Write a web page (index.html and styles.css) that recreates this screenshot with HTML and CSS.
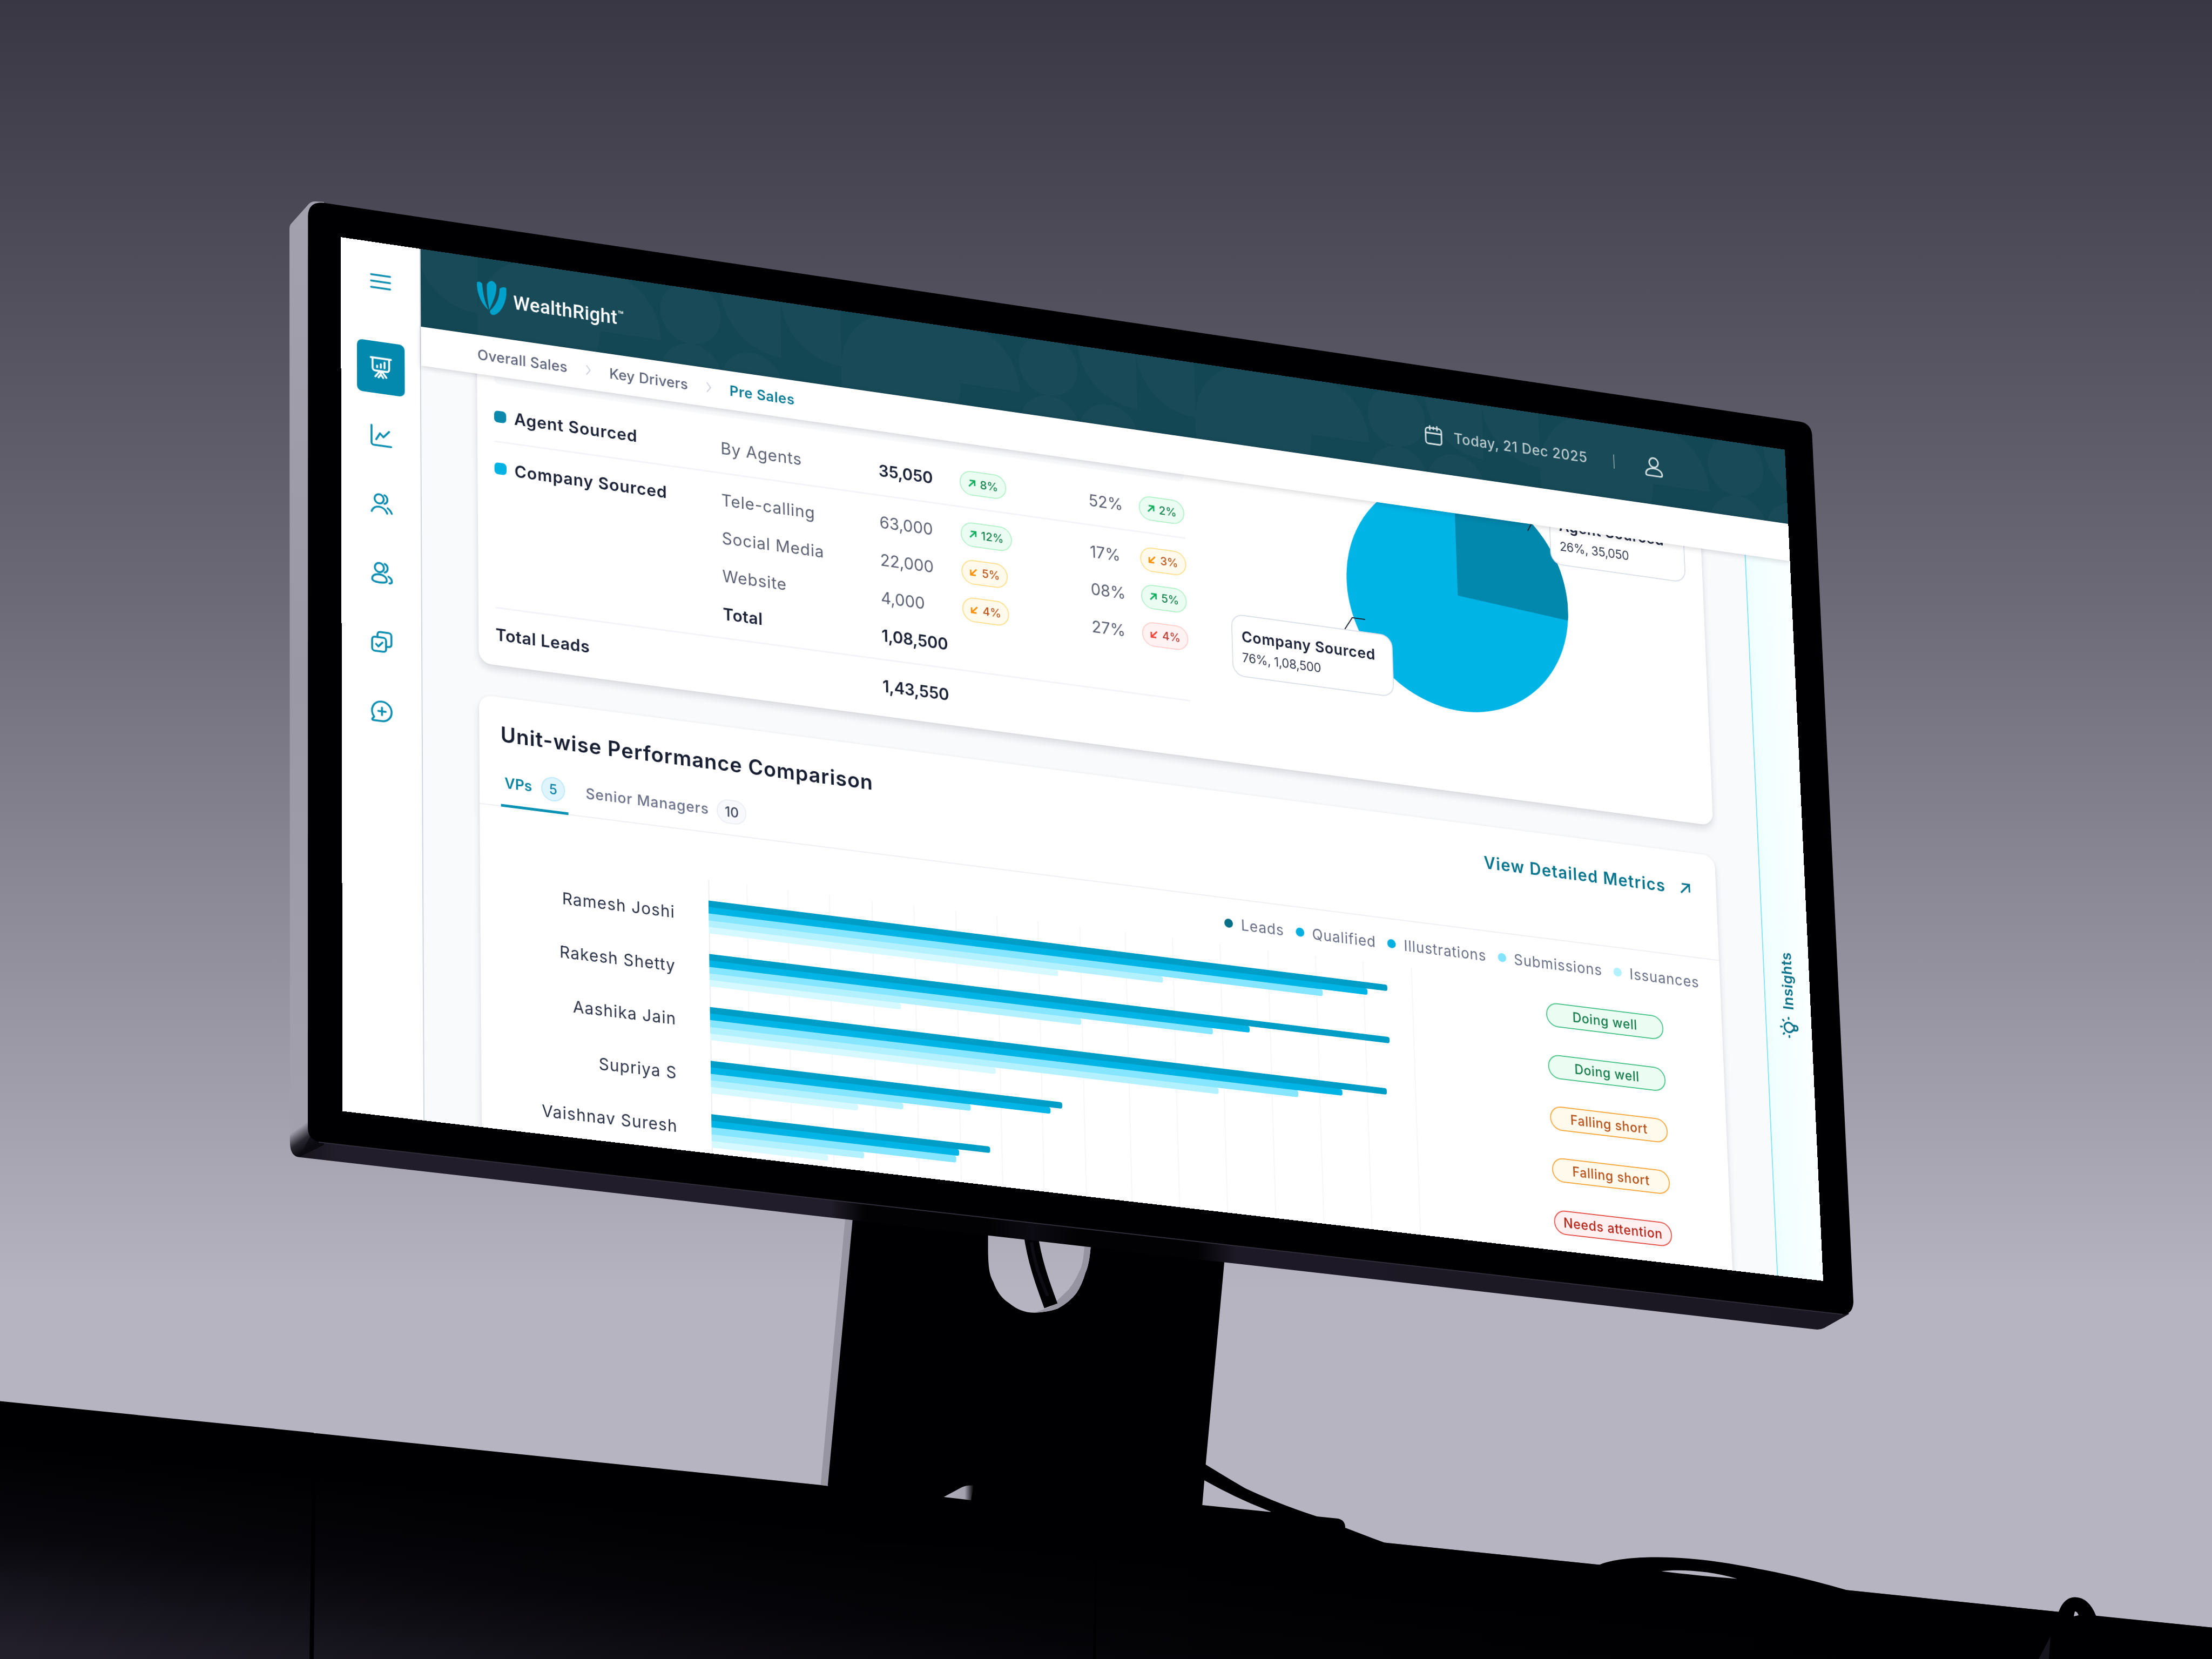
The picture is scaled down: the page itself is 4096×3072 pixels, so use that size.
FILE: index.html
```html
<!DOCTYPE html>
<html lang="en">
<head>
    <meta charset="UTF-8">
    <meta name="viewport" content="width=device-width, initial-scale=1.0">
    <title>WealthRight - Pre Sales</title>
    <link rel="stylesheet" href="styles.css">
</head>
<body>
    <div class="scene">
        <!-- desk, stand and monitor body -->
        <svg class="backdrop" viewBox="0 0 4096 3072" width="4096" height="3072">
            <defs>
                <linearGradient id="deskFade" gradientUnits="userSpaceOnUse" x1="300" y1="2700" x2="262" y2="3072">
                    <stop offset="0" stop-color="#000002"/>
                    <stop offset="0.45" stop-color="#08070c"/>
                    <stop offset="1" stop-color="#221f2b"/>
                </linearGradient>
                <linearGradient id="deskShade" x1="0" y1="0" x2="1" y2="0">
                    <stop offset="0" stop-color="#000002" stop-opacity="0"/>
                    <stop offset="0.75" stop-color="#000002" stop-opacity="0.7"/>
                    <stop offset="1" stop-color="#000002" stop-opacity="1"/>
                </linearGradient>
                <linearGradient id="sideFace" gradientUnits="userSpaceOnUse" x1="536" y1="380" x2="536" y2="2140">
                    <stop offset="0" stop-color="#a3a1ae"/>
                    <stop offset="0.5" stop-color="#9a98a5"/>
                    <stop offset="1" stop-color="#a3a1ae"/>
                </linearGradient>
                <linearGradient id="cornerFade" gradientUnits="userSpaceOnUse" x1="548" y1="2092" x2="572" y2="2126">
                    <stop offset="0" stop-color="#14121a" stop-opacity="0"/>
                    <stop offset="0.55" stop-color="#14121a" stop-opacity="0.85"/>
                    <stop offset="1" stop-color="#0b0a10"/>
                </linearGradient>
                <linearGradient id="bottomFace" gradientUnits="userSpaceOnUse" x1="540" y1="0" x2="3430" y2="0">
                    <stop offset="0" stop-color="#14121a"/>
                    <stop offset="0.03" stop-color="#211d2a"/>
                    <stop offset="0.345" stop-color="#211d2a"/>
                    <stop offset="0.368" stop-color="#020204"/>
                    <stop offset="0.445" stop-color="#020204"/>
                    <stop offset="0.475" stop-color="#0d0b13"/>
                    <stop offset="0.505" stop-color="#020204"/>
                    <stop offset="0.58" stop-color="#020204"/>
                    <stop offset="0.605" stop-color="#1d1926"/>
                    <stop offset="1" stop-color="#1b1722"/>
                </linearGradient>
                <linearGradient id="gapFade" x1="0" y1="0" x2="1" y2="0">
                    <stop offset="0" stop-color="#b0aebb"/>
                    <stop offset="0.7" stop-color="#a3a1ae"/>
                    <stop offset="1" stop-color="#000002"/>
                </linearGradient>
            </defs>

            <!-- desk -->
            <path fill="url(#deskFade)" d="M0 2594.6 L581 2653 L583 2657 L586 2654 L1520 2750 L2563.6 2856.6 L2961.6 2897.4 C2985 2888 3020 2883.4 3069.4 2883.4 C3150 2884 3215 2897 3265.3 2906.7 Q3340 2921 3420 2944.5 L3812 2984.7 Q3822 2957.6 3842.3 2957.6 Q3868 2958 3881.5 2992.5 L4096 3013.8 V3072 H0 Z"/>
            <path fill="url(#deskShade)" d="M0 2594.6 L2563.6 2856.6 L2961.6 2897.4 L4096 3013.8 V3072 H0 Z"/>
            <path fill="#000002" d="M579 2654 L586 2654 L581 3072 H573 Z M2029 2820 H2033 L2029 3072 H2024 Z M3388 2944 H3391 L3390 3072 H3387 Z"/>
            <path fill="#b5b3c0" d="M3076 2909.6 C3110 2905 3170 2909 3217 2923.5 C3170 2920 3120 2915 3076 2909.6 Z M3840 2993 L3842 2984 Q3846 2983 3849 2991 Z"/>
            <path fill="#16141d" d="M3797 3030 L3794 3072 H3775 Z"/>

            <!-- stand -->
            <path fill="#9795a2" d="M1565.6 2250 L1519.6 2750 L1536 2752 L1583 2250 Z"/>
            <path fill="#000002" fill-rule="evenodd" d="M1580.5 2240 L1532.8 2750.7 L1600 2860 H2340 L2352.8 2799.7 L2226.3 2787 L2232.5 2713 L2267 2338 L2275 2240 Z
                M1829.6 2280 V2315 C1830 2350 1833 2362 1839 2373 C1846 2393 1856 2405 1868.6 2413 Q1890 2431 1915.5 2430.8 Q1940 2430 1958.4 2423.3 Q1981 2411 1993.6 2394 Q2004 2378 2010 2356.8 Q2020 2335 2021 2280 Z"/>
            <path fill="#9694a1" d="M2009 2280 C2008 2330 2004 2345 1997.3 2357 Q1990 2374 1978 2388.7 L1945 2420 L1915 2430.8 Q1940 2430 1958.4 2423.3 Q1981 2411 1993.6 2394 Q2004 2378 2010 2356.8 Q2020 2335 2021 2280 Z"/>
            <path fill="none" stroke="#020204" stroke-width="26" d="M1908 2280 C1914 2330 1930 2375 1946 2418"/>
            <path fill="none" stroke="#0e0d14" stroke-width="6" d="M1910 2300 C1916 2345 1930 2375 1940 2400"/>
            <path fill="url(#gapFade)" d="M1747.6 2772 L1781 2754 Q1790 2750 1803 2750.7 L1798 2778 Z"/>
            <path fill="#000002" d="M2231 2711 Q2270 2735 2306 2756 Q2370 2786 2438.6 2808 L2478 2812 Q2491 2815 2491 2829 L2563.6 2856.6 L2491 2900 H2280 L2353 2799 Q2290 2775 2228 2740 Z"/>

            <!-- monitor -->
            <path fill="url(#sideFace)" d="M584 373 Q576 373 571.700 377.800 L541 412 Q536 416 536 424 L537 2118 Q538 2141 554 2142.8 L600 2120 V374 Z"/>
            <path fill="url(#bottomFace)" d="M574 2105 L554 2142.8 L3360 2461.5 Q3370 2463 3378 2459 L3424 2433 L3400 2400 Z"/>
            <path fill="url(#cornerFade)" d="M536 2085 L537 2118 Q538 2141 554 2142.8 L600 2120 V2070 Z"/>
            <path fill="#000002" d="M570.3 400 Q571 373 598.6 375.4 L3334 781 Q3354 785 3355.5 806 L3432 2411 Q3431 2431 3416 2434.2 L596 2115.5 Q570 2112 570 2088 Z"/>
            <path fill="none" stroke="#2f2c38" stroke-width="2" d="M590 2115 L3412 2434"/>
        </svg>

        <div class="screen">
            <nav class="sidebar">
                <a class="nav-item menu"><svg viewBox="0 0 24 24"><path d="M3 6h18M3 12h18M3 18h18"/></svg></a>
                <a class="nav-item active"><svg viewBox="0 0 24 24"><path d="M2.5 3.2h19M4.2 3.2v9.6a2.4 2.4 0 0 0 2.4 2.4h10.8a2.4 2.4 0 0 0 2.4-2.4V3.2M8.5 12v-1.6M12 12V8.6M15.5 12V6.6M6.800 20.800l4.200-5.300M17.200 20.800l-4.200-5.300M9.800 21.300l2.200-3 2.200 3M12 15.500v2.800"/></svg></a>
                <a class="nav-item"><svg viewBox="0 0 24 24"><path d="M3 2.5V19a2 2 0 0 0 2 2h16.5M7.4 15.5l3.6-6 3.2 3.3 5.4-5.8"/></svg></a>
                <a class="nav-item"><svg viewBox="0 0 24 24"><circle cx="10" cy="7.2" r="4.3"/><path d="M15 3.2a4.3 4.3 0 0 1 0 8M3 19.500C5 13 14.500 12.500 17.500 20M18 15c1.600 1 2.900 2.500 3.800 4.600"/></svg></a>
                <a class="nav-item"><svg viewBox="0 0 24 24"><circle cx="10" cy="7" r="4.3"/><path d="M15 3a4.3 4.3 0 0 1 0 8M3.200 18c0-3 3-4.700 6.800-4.700s6.900 2 6.900 5.200c0 1.700-2.800 2.300-6.700 2.300S3.200 20 3.200 18zM18.500 14.400c1.900.9 3.200 2.500 3.200 4.300 0 1.200-.9 1.700-2.300 1.900"/></svg></a>
                <a class="nav-item"><svg viewBox="0 0 24 24"><rect x="3" y="8" width="13" height="13" rx="2.5"/><path d="M8 8V5.500A2.500 2.500 0 0 1 10.500 3h8A2.500 2.500 0 0 1 21 5.500v8a2.500 2.500 0 0 1-2.500 2.500H16M6.800 14.600l2 2 3.800-4"/></svg></a>
                <a class="nav-item"><svg viewBox="0 0 24 24"><path d="M12 3a9 9 0 0 1 0 18H3.900c-1 0-1.300-.9-.7-1.500l1.500-1.800A9 9 0 0 1 12 3zM12 8.500v7M8.500 12h7"/></svg></a>
            </nav>

            <div class="main">
                <header class="header">
                    <svg class="header-pattern" viewBox="0 0 2729 148" width="2729" height="148">
                        <defs>
                            <pattern id="shapes" x="108" y="-10" width="702" height="234" patternUnits="userSpaceOnUse">
                                <g fill="#fff" fill-opacity="0.014">
                                    <path d="M0 117A117 117 0 0 1 117 0V117Z"/>
                                    <rect x="117" y="0" width="117" height="117"/>
                                    <path d="M234 0A117 117 0 0 1 351 117H234Z"/>
                                    <circle cx="409" cy="58" r="58"/>
                                    <path d="M468 0A117 117 0 0 0 585 117V0Z"/>
                                    <path d="M585 0H702V117A117 117 0 0 1 585 0Z"/>
                                    <rect x="0" y="117" width="117" height="117"/>
                                    <path d="M351 175A58 58 0 0 1 468 175V234H351Z"/>
                                    <path d="M468 175A58 58 0 0 1 585 175V234H468Z"/>
                                    <path d="M117 117H234A117 117 0 0 1 117 234Z"/>
                                </g>
                            </pattern>
                        </defs>
                        <rect width="2729" height="148" fill="url(#shapes)"/>
                    </svg>
                    <div class="brand">
                        <svg class="brand-mark" viewBox="0 0 56 66"><path d="M0 7Q5 3 10 8C11 24 14 42 22 57C7 46-1 26 0 7ZM19 8Q23 1 28 0Q34 1 37 7C38 24 31 38 23.500 56C20 40 18 24 19 8ZM43 13Q50 7 56 10C58 34 47 57 34 64Q27 67 24.500 61Q24 59 25 57C37 44 43 30 43 13Z"/></svg>
                        <span class="brand-name">WealthRight<sup>™</sup></span>
                    </div>
                    <div class="header-right">
                        <svg class="header-icon" viewBox="0 0 24 24"><rect x="3.2" y="4.5" width="17.6" height="17" rx="3"/><path d="M3.200 10h17.600M8 2.500v4M12 3.500v2M16 2.500v4"/></svg>
                        <span class="today">Today, 21 Dec 2025</span>
                        <span class="header-sep"></span>
                        <svg class="header-icon" viewBox="0 0 24 24"><circle cx="12" cy="7" r="5"/><path d="M2.800 19.500c0-3.800 4-6.300 9.200-6.300s9.200 2.500 9.200 6.300c0 1.200-.8 1.800-2 1.800H4.800c-1.200 0-2-.6-2-1.800z"/></svg>
                    </div>
                </header>

                <div class="breadcrumb">
                    <a>Overall Sales</a>
                    <svg viewBox="0 0 12 24"><path d="M2 3l7 9-7 9"/></svg>
                    <a>Key Drivers</a>
                    <svg viewBox="0 0 12 24"><path d="M2 3l7 9-7 9"/></svg>
                    <a class="current">Pre Sales</a>
                </div>

                <div class="body">
                    <div class="content">
                        <section class="card leads-card">
                            <div class="leads-table">
                                <div class="table-head"></div>
                                <div class="row agent-row">
                                    <span class="source"><i class="swatch dark"></i>Agent Sourced</span>
                                    <span>By Agents</span>
                                    <span class="num strong">35,050</span>
                                    <span class="badge up"><svg viewBox="0 0 14 14"><path d="M2 12L12 2M3.5 2H12v8.5"/></svg>8%</span>
                                    <span class="num">52%</span>
                                    <span class="badge up"><svg viewBox="0 0 14 14"><path d="M2 12L12 2M3.5 2H12v8.5"/></svg>2%</span>
                                </div>
                                <div class="group">
                                    <div class="row">
                                        <span class="source"><i class="swatch light"></i>Company Sourced</span>
                                        <span>Tele-calling</span>
                                        <span class="num">63,000</span>
                                        <span class="badge up"><svg viewBox="0 0 14 14"><path d="M2 12L12 2M3.5 2H12v8.5"/></svg>12%</span>
                                        <span class="num">17%</span>
                                        <span class="badge down"><svg viewBox="0 0 14 14"><path d="M12 2L2 12M2 3.5V12h8.5"/></svg>3%</span>
                                    </div>
                                    <div class="row">
                                        <span></span>
                                        <span>Social Media</span>
                                        <span class="num">22,000</span>
                                        <span class="badge down"><svg viewBox="0 0 14 14"><path d="M12 2L2 12M2 3.5V12h8.5"/></svg>5%</span>
                                        <span class="num">08%</span>
                                        <span class="badge up"><svg viewBox="0 0 14 14"><path d="M2 12L12 2M3.5 2H12v8.5"/></svg>5%</span>
                                    </div>
                                    <div class="row">
                                        <span></span>
                                        <span>Website</span>
                                        <span class="num">4,000</span>
                                        <span class="badge down"><svg viewBox="0 0 14 14"><path d="M12 2L2 12M2 3.5V12h8.5"/></svg>4%</span>
                                        <span class="num">27%</span>
                                        <span class="badge bad"><svg viewBox="0 0 14 14"><path d="M12 2L2 12M2 3.5V12h8.5"/></svg>4%</span>
                                    </div>
                                    <div class="row">
                                        <span></span>
                                        <span class="strong">Total</span>
                                        <span class="num strong">1,08,500</span>
                                    </div>
                                </div>
                                <div class="row total-row">
                                    <span class="strong">Total Leads</span>
                                    <span></span>
                                    <span class="num strong">1,43,550</span>
                                </div>
                            </div>
                            <div class="pie-area">
                                <svg class="pie" viewBox="-226 -226 452 452">
                                    <circle r="226" fill="#00b4e6"/>
                                    <path fill="#0288ad" d="M0 1V-226A226 226 0 0 1 225.200 20Z"/>
                                </svg>
                                <svg class="leaders" viewBox="0 0 1000 600"><path d="M251 365l17-26h26M634 120l18-32h26"/></svg>
                                <div class="callout callout-agent">
                                    <strong>Agent Sourced</strong>
                                    <span>26%, 35,050</span>
                                </div>
                                <div class="callout callout-company">
                                    <strong>Company Sourced</strong>
                                    <span>76%, 1,08,500</span>
                                </div>
                            </div>
                        </section>

                        <section class="card unit-card">
                            <div class="unit-head">
                                <h2>Unit-wise Performance Comparison</h2>
                                <a class="details">View Detailed Metrics <svg viewBox="0 0 22 22"><path d="M3 19L19 3M5 3h14v14"/></svg></a>
                            </div>
                            <div class="tabs">
                                <a class="tab active">VPs <span class="count">5</span></a>
                                <a class="tab">Senior Managers <span class="count wide">10</span></a>
                            </div>
                            <div class="legend">
                                <span><i class="c-leads"></i>Leads</span>
                                <span><i class="c-qualified"></i>Qualified</span>
                                <span><i class="c-illustrations"></i>Illustrations</span>
                                <span><i class="c-submissions"></i>Submissions</span>
                                <span><i class="c-issuances"></i>Issuances</span>
                            </div>
                            <div class="chart">
                                <div class="names">
                                    <span>Ramesh Joshi</span>
                                    <span>Rakesh Shetty</span>
                                    <span>Aashika Jain</span>
                                    <span>Supriya S</span>
                                    <span>Vaishnav Suresh</span>
                                </div>
                                <div class="plot">
                                    <div class="gridlines"><i></i><i></i><i></i><i></i><i></i><i></i><i></i><i></i><i></i><i></i><i></i><i></i><i></i><i></i><i></i><i></i></div>
                                    <div class="bars">
                                        <div class="bar-group"><b style="width:1326px"></b><b style="width:1286px"></b><b style="width:1196px"></b><b style="width:879px"></b><b style="width:673px"></b></div>
                                        <div class="bar-group"><b style="width:1327px"></b><b style="width:1048px"></b><b style="width:975px"></b><b style="width:716px"></b><b style="width:366px"></b></div>
                                        <div class="bar-group"><b style="width:1318px"></b><b style="width:1229px"></b><b style="width:1141px"></b><b style="width:983px"></b><b style="width:547px"></b></div>
                                        <div class="bar-group"><b style="width:675px"></b><b style="width:652px"></b><b style="width:497px"></b><b style="width:367px"></b><b style="width:280px"></b></div>
                                        <div class="bar-group"><b style="width:533px"></b><b style="width:473px"></b><b style="width:467px"></b><b style="width:290px"></b><b style="width:221px"></b></div>
                                    </div>
                                </div>
                                <div class="statuses">
                                    <div><span class="status good">Doing well</span></div>
                                    <div><span class="status good">Doing well</span></div>
                                    <div><span class="status short">Falling short</span></div>
                                    <div><span class="status short">Falling short</span></div>
                                    <div><span class="status bad">Needs attention</span></div>
                                </div>
                            </div>
                        </section>
                    </div>

                    <aside class="insights">
                        <span>Insights</span>
                        <svg viewBox="0 0 24 24"><path d="M9.500 17.200v-1.500a5 5 0 1 1 5 0v1.500M9.500 17.200h5v2a2 2 0 0 1-2 2h-1a2 2 0 0 1-2-2zM12 2.200v1.300M4.500 5l.9.900M19.500 5l-.9.900M1.800 11.500h1.300M20.900 11.500h1.300"/></svg>
                    </aside>
                </div>
            </div>
        </div>
    </div>
</body>
</html>
```
FILE: styles.css
```css
* {
    box-sizing: border-box;
}
body {
    margin: 0;
    font-family: Inter, "Open Sans", sans-serif;
    background-color: #b6b4c1;
}
.scene {
    position: relative;
    width: 4096px;
    height: 3072px;
    overflow: hidden;
    background: linear-gradient(#3a3744 0%, #4c4957 13%, #6b6875 35%, #8f8d99 56%, #b6b4c1 78%);
}
.backdrop {
    display: block;
}

/* the app, projected onto the monitor panel */
.screen {
    position: absolute;
    top: 0;
    left: 0;
    width: 2880px;
    height: 1620px;
    display: flex;
    overflow: hidden;
    background-color: #fff;
    transform-origin: 0 0;
    transform: matrix3d(0.993646, 0.153056, 0, 0.0000197205, -0.008148, 0.965864, 0, -0.0000161512, 0, 0, 1, 0, 631, 439.1, 0, 1);
}

/* sidebar */
.sidebar {
    width: 151px;
    flex-shrink: 0;
    display: flex;
    flex-direction: column;
    align-items: center;
    padding-top: 25px;
    border-right: 2px solid #d0d5e0;
    background-color: #fff;
}
.nav-item {
    width: 90px;
    height: 98px;
    margin-bottom: 30.5px;
    display: flex;
    align-items: center;
    justify-content: center;
    border-radius: 10px;
}
.nav-item.menu {
    margin-bottom: 65px;
}
.nav-item svg {
    width: 48px;
    height: 48px;
    fill: none;
    stroke: #0a8db0;
    stroke-width: 1.8;
    stroke-linecap: round;
    stroke-linejoin: round;
}
.nav-item.active {
    background-color: #0289ad;
}
.nav-item.active svg {
    stroke: #fff;
}

.main {
    flex: 1;
    min-width: 0;
    display: flex;
    flex-direction: column;
}

/* header */
.header {
    position: relative;
    height: 148px;
    flex-shrink: 0;
    display: flex;
    align-items: center;
    justify-content: space-between;
    padding: 0 256px 0 107px;
    background-color: #144754;
}
.header-pattern {
    position: absolute;
    top: 0;
    left: 0;
}
.brand,
.header-right {
    position: relative;
    display: flex;
    align-items: center;
}
.brand-mark {
    width: 56px;
    height: 66px;
    fill: #00a2cb;
}
.brand-name {
    margin: 6px 0 0 13px;
    font-family: Roboto, sans-serif;
    font-size: 36px;
    font-weight: 500;
    letter-spacing: 0.4px;
    color: #fff;
}
.brand-name sup {
    font-size: 20px;
    line-height: 0;
    vertical-align: 12px;
}
.header-icon {
    width: 44px;
    height: 44px;
    fill: none;
    stroke: #d3dee1;
    stroke-width: 1.7;
    stroke-linecap: round;
}
.today {
    margin-left: 20px;
    font-size: 28px;
    font-weight: 500;
    letter-spacing: 0.7px;
    color: #b9c9cd;
}
.header-sep {
    width: 2px;
    height: 28px;
    margin: 0 60px 0 54px;
    background-color: #7f9aa1;
}

/* breadcrumb */
.breadcrumb {
    position: relative;
    z-index: 2;
    height: 74px;
    flex-shrink: 0;
    display: flex;
    align-items: center;
    padding-left: 107px;
    font-size: 27px;
    font-weight: 500;
    letter-spacing: 0.3px;
    color: #5d6479;
    background-color: #fff;
    box-shadow: 0 3px 10px rgba(20, 20, 40, 0.16);
}
.breadcrumb svg {
    width: 12px;
    height: 24px;
    margin: 0 34px;
    fill: none;
    stroke: #c9cdd8;
    stroke-width: 2;
}
.breadcrumb .current {
    font-weight: 600;
    letter-spacing: 0.6px;
    color: #0a7c95;
}

.body {
    flex: 1;
    min-height: 0;
    display: flex;
}
.content {
    flex: 1;
    padding: 0 91px 0 106px;
    background-color: #f9fafc;
}
.card {
    background-color: #fff;
    border-radius: 24px;
    box-shadow: 0 8px 14px rgba(25, 25, 50, 0.13), 0 0 5px rgba(25, 25, 50, 0.05);
}

/* leads card, scrolled partly under the breadcrumb */
.leads-card {
    height: 650px;
    margin-top: -106px;
    padding: 31px 0 0 32px;
    display: flex;
    color: #5c6172;
}
.leads-table {
    width: 1347px;
    font-size: 31px;
    letter-spacing: 0.9px;
}
.table-head {
    height: 90px;
    border-radius: 12px;
    background-color: #f8f9fb;
}
.row {
    height: 72px;
    display: grid;
    grid-template-columns: 434px 307px 159px 255px 100px 92px;
    align-items: center;
}
.agent-row {
    height: 107px;
    padding-top: 14px;
}
.group {
    height: 316px;
    padding-top: 13px;
    border-top: 3px solid #f3f4f7;
    border-bottom: 3px solid #f3f4f7;
}
.total-row {
    height: 97px;
}
.source {
    display: flex;
    align-items: center;
    font-weight: 600;
    letter-spacing: 1px;
    color: #1a2135;
}
.swatch {
    width: 23px;
    height: 22px;
    margin-right: 15px;
    border-radius: 7px;
}
.swatch.dark {
    background-color: #0a89ad;
}
.swatch.light {
    background-color: #04b2e3;
}
.strong {
    font-weight: 600;
    letter-spacing: 0.6px;
    color: #1a2135;
}
.num {
    letter-spacing: 0;
}
.num.strong {
    letter-spacing: -0.3px;
}
.badge {
    justify-self: start;
    height: 47px;
    padding: 0 14px;
    display: flex;
    align-items: center;
    font-size: 22px;
    font-weight: 500;
    letter-spacing: 0;
    border: 2px solid;
    border-radius: 24px;
}
.badge svg {
    width: 16px;
    height: 16px;
    margin-right: 8px;
    fill: none;
    stroke-width: 2.6;
}
.badge.up {
    color: #17804f;
    background-color: #ebfdf2;
    border-color: #b4f1cb;
}
.badge.up svg {
    stroke: #14ad60;
}
.badge.down {
    color: #b9541c;
    background-color: #fffaeb;
    border-color: #fde08f;
}
.badge.down svg {
    stroke: #f79009;
}
.badge.bad {
    color: #b83a32;
    background-color: #fef2f2;
    border-color: #fecfcd;
}
.badge.bad svg {
    stroke: #f04438;
}

/* pie */
.pie-area {
    position: relative;
    flex: 1;
}
.pie {
    position: absolute;
    left: 323px;
    top: 9px;
    width: 452px;
    height: 452px;
}
.leaders {
    position: absolute;
    left: 64px;
    top: -31px;
    width: 1000px;
    height: 600px;
    fill: none;
    stroke: #1b2030;
    stroke-width: 2;
}
.callout {
    position: absolute;
    height: 120px;
    padding: 22px 18px;
    display: flex;
    flex-direction: column;
    gap: 7px;
    font-size: 24px;
    line-height: 32px;
    letter-spacing: -0.3px;
    color: #343b4e;
    border: 2px solid #dbdfe8;
    border-radius: 24px;
    background-color: #fff;
}
.callout strong {
    font-size: 29px;
    line-height: 36px;
    font-weight: 600;
    letter-spacing: 0.7px;
    color: #1a2135;
}
.callout-company {
    left: 87px;
    top: 332px;
    width: 325px;
}
.callout-agent {
    left: 743px;
    top: 28px;
    width: 280px;
}

/* unit-wise performance */
.unit-card {
    height: 900px;
    margin-top: 59px;
}
.unit-head {
    height: 119px;
    display: flex;
    align-items: flex-start;
    justify-content: space-between;
    padding: 43px 52px 0 40px;
}
.unit-head h2 {
    margin: 0;
    font-size: 39px;
    line-height: 52px;
    font-weight: 600;
    letter-spacing: 1.1px;
    color: #171d30;
}
.details {
    display: flex;
    align-items: center;
    font-size: 32px;
    line-height: 56px;
    font-weight: 600;
    letter-spacing: 1.6px;
    color: #07748d;
}
.details svg {
    width: 24px;
    height: 24px;
    margin-left: 28px;
    fill: none;
    stroke: #07748d;
    stroke-width: 3;
}
.tabs {
    height: 84px;
    display: flex;
    gap: 26px;
    padding-left: 40px;
    border-bottom: 2px solid #eff0f4;
}
.tab {
    height: 84px;
    display: flex;
    align-items: center;
    padding: 0 6px 0 7px;
    font-size: 27px;
    font-weight: 500;
    letter-spacing: 1px;
    color: #6a7188;
    border-bottom: 5px solid transparent;
}
.tab.active {
    font-weight: 600;
    letter-spacing: 0;
    color: #0a83a0;
    border-bottom-color: #0a92b5;
}
.count {
    width: 45px;
    height: 45px;
    margin-left: 17px;
    display: flex;
    align-items: center;
    justify-content: center;
    font-size: 25px;
    font-weight: 500;
    letter-spacing: 0;
    color: #0a83a0;
    border: 2px solid #bfeafa;
    border-radius: 23px;
    background-color: #e0f4fd;
}
.count.wide {
    width: 57px;
    margin-left: 15px;
    color: #3d455c;
    border-color: #eceef4;
    background-color: #f8f9fc;
}
.legend {
    height: 88px;
    display: flex;
    align-items: center;
    justify-content: flex-end;
    gap: 23px;
    padding: 5px 43px 0 0;
    font-size: 28px;
    letter-spacing: 1.1px;
    color: #666d83;
}
.legend span {
    display: flex;
    align-items: center;
}
.legend i {
    width: 17px;
    height: 17px;
    margin-right: 16px;
    border-radius: 50%;
}
.c-leads {
    background-color: #0a7088;
}
.c-qualified,
.c-illustrations {
    background-color: #05afe0;
}
.c-submissions {
    background-color: #84e4fb;
}
.c-issuances {
    background-color: #b4f1ff;
}

.chart {
    height: 584px;
    display: grid;
    grid-template-columns: 431px 1376px 1fr;
}
.names {
    padding: 18px 64px 0 0;
    text-align: right;
    font-size: 30px;
    letter-spacing: 1.3px;
    color: #2a3145;
}
.names span {
    display: block;
    height: 98.5px;
    line-height: 98.5px;
}
.plot {
    display: grid;
}
.gridlines,
.bars {
    grid-area: 1 / 1;
}
.gridlines {
    display: grid;
    grid-template-columns: 73px 78px 80px 82px 81px 81px 80px 80px 82px 89px 93px 94px 95px 95px 95px 97px;
    border-left: 2px solid #eceef2;
}
.gridlines i {
    border-right: 2px solid #f5f6f9;
}
.bars {
    padding-top: 38px;
}
.bar-group {
    height: 98.5px;
}
.bar-group b {
    display: block;
    height: 12.2px;
    border-radius: 0 4px 4px 0;
}
.bar-group b:nth-child(1) {
    background-color: #009ec7;
}
.bar-group b:nth-child(2) {
    background-color: #00b4e6;
}
.bar-group b:nth-child(3) {
    background-color: #87e6ff;
}
.bar-group b:nth-child(4) {
    background-color: #b3f1ff;
}
.bar-group b:nth-child(5) {
    background-color: #d6f8ff;
}
.statuses {
    padding: 7px 0 0 270px;
}
.statuses div {
    height: 98.4px;
    display: flex;
    align-items: center;
}
.status {
    width: 239px;
    height: 46px;
    display: flex;
    align-items: center;
    justify-content: center;
    font-size: 25px;
    font-weight: 500;
    letter-spacing: 0.8px;
    border: 2px solid;
    border-radius: 23px;
}
.status.good {
    color: #157a4a;
    background-color: #ebfdf2;
    border-color: #4cc38a;
}
.status.short {
    color: #b44f18;
    background-color: #fffaeb;
    border-color: #f5a93f;
}
.status.bad {
    color: #b42318;
    background-color: #fef0f0;
    border-color: #e4554d;
}

/* insights rail */
.insights {
    width: 95px;
    flex-shrink: 0;
    display: flex;
    flex-direction: column;
    align-items: center;
    gap: 12px;
    padding-top: 772px;
    border-left: 2px solid #7fe4fb;
    background: linear-gradient(90deg, #f0feff, #fbffff);
}
.insights span {
    writing-mode: vertical-rl;
    transform: rotate(180deg);
    font-size: 28px;
    font-weight: 600;
    letter-spacing: 0.6px;
    color: #0a7088;
}
.insights svg {
    width: 44px;
    height: 44px;
    transform: rotate(-90deg);
    fill: none;
    stroke: #0a7088;
    stroke-width: 1.9;
    stroke-linecap: round;
}
```
